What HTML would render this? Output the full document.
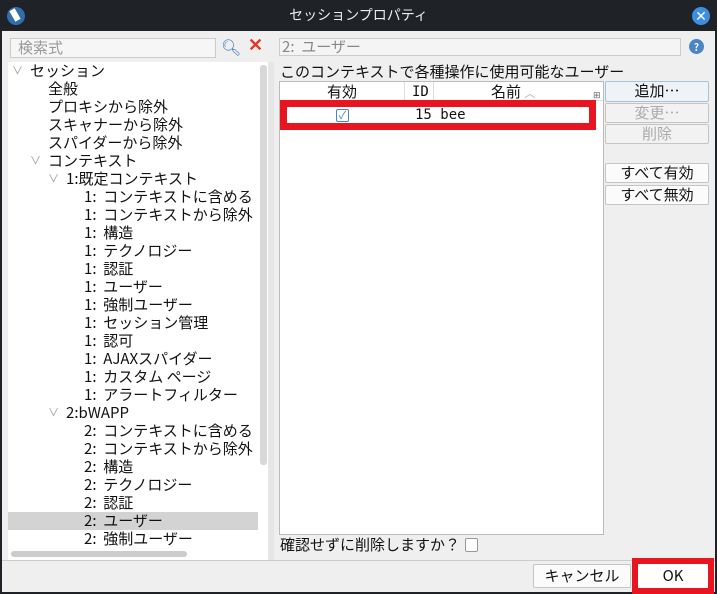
<!DOCTYPE html>
<html><head><meta charset="utf-8"><style>
*{margin:0;padding:0;box-sizing:border-box}
body{width:717px;height:594px;overflow:hidden;background:#1f2226;font-family:"Noto Sans CJK JP","Liberation Sans",sans-serif;font-size:15px;color:#111;position:relative}
.win{position:absolute;left:0;top:31px;width:717px;height:563px;background:#efefef;border:2px solid #1f2226;border-top:none}
.title{position:absolute;left:0;top:0;width:717px;height:31px;color:#eee;text-align:center;line-height:31px;font-size:14px}
.a{position:absolute;white-space:nowrap;line-height:18px}
.tree{position:absolute;left:8px;top:62px;width:260px;height:498px;background:#fff;overflow:hidden}
.tree div{position:absolute;white-space:nowrap;line-height:18px}
.btn{position:absolute;background:#fbfbfb;border:1px solid #c5c5c5;border-radius:2px;text-align:center;line-height:18px}
.chev{color:#999;font-size:11px}
</style></head><body>
<div class="title">セッションプロパティ</div>
<div class="a" style="left:7px;top:7px;width:18px;height:18px;border-radius:50%;background:#2f6fb0"></div>
<div class="a" style="left:12px;top:9px;width:6px;height:12px;background:#fff;transform:rotate(-30deg)"></div>
<div class="a" style="left:692px;top:7px;width:18px;height:18px;border-radius:50%;background:#3d8ee0;color:#fff;text-align:center;line-height:18px;font-size:14px">✕</div>
<div class="win">
<div class="a" style="left:8px;top:7px;width:206px;height:20px;background:#f6f6f6;border:1px solid #ccc;color:#999;padding-left:7px;line-height:18px">検索式</div>
<div class="a" style="left:219px;top:6px;font-size:16px;color:#3a7ab8">&#x1F50D;&#xFE0E;</div>
<div class="a" style="left:246px;top:4px;font-size:18px;color:#e03a2a;font-weight:bold">✕</div>
</div>
<div class="tree">
<div style="left:4px;top:-1px" class="chev">∨</div><div style="left:22px;top:0">セッション</div>
<div style="left:40px;top:18px">全般</div>
<div style="left:40px;top:36px">プロキシから除外</div>
<div style="left:40px;top:54px">スキャナーから除外</div>
<div style="left:40px;top:72px">スパイダーから除外</div>
<div style="left:22px;top:89px" class="chev">∨</div><div style="left:40px;top:90px">コンテキスト</div>
<div style="left:40px;top:107px" class="chev">∨</div><div style="left:58px;top:108px">1:既定コンテキスト</div>
<div style="left:76px;top:126px">1:&nbsp;&nbsp;コンテキストに含める</div>
<div style="left:76px;top:144px">1:&nbsp;&nbsp;コンテキストから除外</div>
<div style="left:76px;top:162px">1:&nbsp;&nbsp;構造</div>
<div style="left:76px;top:180px">1:&nbsp;&nbsp;テクノロジー</div>
<div style="left:76px;top:198px">1:&nbsp;&nbsp;認証</div>
<div style="left:76px;top:216px">1:&nbsp;&nbsp;ユーザー</div>
<div style="left:76px;top:234px">1:&nbsp;&nbsp;強制ユーザー</div>
<div style="left:76px;top:252px">1:&nbsp;&nbsp;セッション管理</div>
<div style="left:76px;top:270px">1:&nbsp;&nbsp;認可</div>
<div style="left:76px;top:288px">1:&nbsp;&nbsp;AJAXスパイダー</div>
<div style="left:76px;top:306px">1:&nbsp;&nbsp;カスタム ページ</div>
<div style="left:76px;top:324px">1:&nbsp;&nbsp;アラートフィルター</div>
<div style="left:40px;top:341px" class="chev">∨</div><div style="left:58px;top:342px">2:bWAPP</div>
<div style="left:76px;top:360px">2:&nbsp;&nbsp;コンテキストに含める</div>
<div style="left:76px;top:378px">2:&nbsp;&nbsp;コンテキストから除外</div>
<div style="left:76px;top:396px">2:&nbsp;&nbsp;構造</div>
<div style="left:76px;top:414px">2:&nbsp;&nbsp;テクノロジー</div>
<div style="left:76px;top:432px">2:&nbsp;&nbsp;認証</div>
<div style="left:0;top:450px;width:250px;height:18px;background:#d3d3d3"></div>
<div style="left:76px;top:450px">2:&nbsp;&nbsp;ユーザー</div>
<div style="left:76px;top:468px">2:&nbsp;&nbsp;強制ユーザー</div>
<div style="left:0;top:487px;width:260px;height:11px;background:#fff"></div>
<div style="left:3px;top:489px;width:176px;height:6px;background:#ccc;border-radius:3px"></div>
<div style="left:252px;top:3px;width:7px;height:400px;background:#d8d8d8;border-radius:3px"></div>
</div>
<div class="a" style="left:268px;top:62px;width:6px;height:498px;background:#e6e6e6"></div>
<div class="a" style="left:279px;top:38px;width:402px;height:18px;background:#f4f4f4;border:1px solid #ccc;color:#888;padding-left:2px;line-height:16px">2:&nbsp;&nbsp;ユーザー</div>
<div class="a" style="left:689px;top:39px;width:15px;height:15px;border-radius:50%;background:#4a86c6;color:#fff;font-size:10px;text-align:center;line-height:15px;font-weight:bold">?</div>
<div class="a" style="left:280px;top:63px">このコンテキストで各種操作に使用可能なユーザー</div>
<div class="a" style="left:279px;top:81px;width:325px;height:454px;background:#fff;border:1px solid #bbb"></div>
<div class="a" style="left:280px;top:82px;width:323px;height:19px;background:#fff;border-bottom:1px solid #ddd"></div>
<div class="a" style="left:404px;top:82px;width:1px;height:19px;background:#ddd"></div>
<div class="a" style="left:433px;top:82px;width:1px;height:19px;background:#ddd"></div>
<div class="a" style="left:327px;top:83px">有効</div>
<div class="a" style="left:412px;top:83px;font-family:'DejaVu Sans Mono',monospace;font-size:14px">ID</div>
<div class="a" style="left:491px;top:83px">名前 <span style="color:#aaa;font-size:11px">︿</span></div>
<div class="a" style="left:593px;top:86px;font-size:9px;color:#666">⊞</div>
<div class="a" style="left:280px;top:100px;width:316px;height:30px;border:7px solid #e8141f;background:#fff"></div>
<div class="a" style="left:336px;top:109px;width:13px;height:13px;border:1px solid #4a86c6;border-radius:2px;color:#4a86c6;font-size:11px;line-height:11px;text-align:center">✓</div>
<div class="a" style="left:415px;top:106px;font-family:'DejaVu Sans Mono',monospace;font-size:14px">15 bee</div>
<div class="btn" style="left:605px;top:81px;width:104px;height:21px;background:#eef3f8;border-color:#a9c2dc">追加…</div>
<div class="btn" style="left:605px;top:103px;width:104px;height:20px;color:#aaa;background:#f2f2f2">変更…</div>
<div class="btn" style="left:605px;top:124px;width:104px;height:20px;color:#aaa;background:#f2f2f2">削除</div>
<div class="btn" style="left:605px;top:163px;width:104px;height:20px">すべて有効</div>
<div class="btn" style="left:605px;top:185px;width:104px;height:20px">すべて無効</div>
<div class="a" style="left:280px;top:536px">確認せずに削除しますか？</div>
<div class="a" style="left:465px;top:538px;width:13px;height:14px;border:1px solid #999;background:#fff;border-radius:2px"></div>
<div class="a" style="left:2px;top:560px;width:713px;height:1px;background:#ccc"></div>
<div class="btn" style="left:533px;top:564px;width:98px;height:24px;line-height:22px">キャンセル</div>
<div class="a" style="left:632px;top:558px;width:82px;height:36px;border:6px solid #e8141f;background:#fff;text-align:center;line-height:24px">OK</div>
</body></html>
